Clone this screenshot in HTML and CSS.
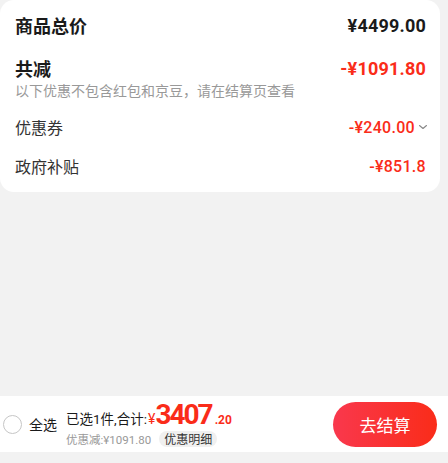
FILE: index.html
```html
<!DOCTYPE html>
<html lang="zh-CN">
<head>
<meta charset="utf-8">
<title>结算</title>
<link rel="stylesheet" href="styles.css">
</head>
<body>
<div class="page">
  <div class="card">
    <div class="row row-total">
      <span class="label-strong">商品总价</span>
      <span class="amt-strong">¥4499.00</span>
    </div>
    <div class="row row-cut">
      <span class="label-strong">共减</span>
      <span class="amt-strong red">-¥1091.80</span>
    </div>
    <div class="note">以下优惠不包含红包和京豆，请在结算页查看</div>
    <div class="row row-item">
      <span class="label">优惠券</span>
      <span class="amt red">-¥240.00<svg class="chev" width="10" height="6" viewBox="0 0 10 6"><polyline points="1.5,1.5 5,4.5 8.5,1.5" fill="none" stroke="#888" stroke-width="1.1" stroke-linecap="round" stroke-linejoin="round"/></svg></span>
    </div>
    <div class="row row-item row-last">
      <span class="label">政府补贴</span>
      <span class="amt red">-¥851.8</span>
    </div>
  </div>
  <div class="spacer"></div>
  <div class="bar">
    <span class="check"></span>
    <span class="all">全选</span>
    <div class="info">
      <div class="sum-line">
        <span class="sum-label">已选1件,合计:</span>
        <span class="yen">¥</span>
        <span class="big">3407</span>
        <span class="dec">.20</span>
      </div>
      <div class="disc-line">
        <span class="disc">优惠减:¥1091.80</span>
        <span class="pill">优惠明细</span>
      </div>
    </div>
    <button class="go">去结算</button>
  </div>
  <div class="foot"></div>
</div>
</body>
</html>
```

FILE: styles.css
```css
* { box-sizing: border-box; }
html, body { margin: 0; padding: 0; }
body {
  background: #f2f2f2;
  font-family: Roboto, "Noto Sans CJK SC", sans-serif;
  color: #1a1a1a;
}
.page {
  display: flex;
  flex-direction: column;
  height: 100vh;
}
.card {
  width: 440px;
  background: #fff;
  border-radius: 14px;
  padding: 12px 14px 15px 15px;
}
.row {
  display: flex;
  justify-content: space-between;
  align-items: center;
}
.row-total { height: 26px; }
.row-cut { height: 22px; margin-top: 19px; }
.row-item { height: 22px; margin-top: 17px; }
.label-strong {
  font-family: "Noto Sans CJK SC", sans-serif;
  font-weight: 700;
  font-size: 18px;
  color: #1a1a1a;
}
.amt-strong {
  font-family: Roboto, sans-serif;
  font-weight: 700;
  font-size: 18px;
  letter-spacing: 0.2px;
  color: #1a1a1a;
}
.red { color: #fa2c19; }
.amt-strong.red { color: #fa2c19; }
.note {
  margin-top: 2px;
  height: 18px;
  line-height: 18px;
  font-family: "Noto Sans CJK SC", sans-serif;
  font-size: 14px;
  color: #999;
}
.label {
  font-family: "Noto Sans CJK SC", sans-serif;
  font-size: 16px;
  color: #333;
}
.amt {
  font-family: Roboto, sans-serif;
  font-weight: 500;
  font-size: 16px;
  letter-spacing: 0.3px;
  display: flex;
  align-items: center;
}
.chev { margin-left: 3px; margin-right: -2px; }
.spacer { flex: 1; }
.bar {
  height: 56px;
  background: #fff;
  display: flex;
  align-items: center;
  padding-left: 3px;
}
.check {
  width: 19px;
  height: 19px;
  border: 1px solid #c6c6c6;
  border-radius: 50%;
  flex: none;
}
.all {
  margin-left: 7px;
  font-family: "Noto Sans CJK SC", sans-serif;
  font-size: 14px;
  color: #1a1a1a;
}
.info {
  margin-left: 9px;
  align-self: flex-start;
  padding-top: 5px;
}
.sum-line {
  display: flex;
  align-items: baseline;
  height: 26px;
}
.sum-label {
  font-family: Roboto, "Noto Sans CJK SC", sans-serif;
  font-size: 13.5px;
  line-height: 1;
  color: #1a1a1a;
}
.yen {
  font-family: Roboto, sans-serif;
  font-size: 14px;
  line-height: 1;
  color: #fa2c19;
  margin-left: 1px;
}
.big {
  font-family: Roboto, sans-serif;
  font-weight: 700;
  font-size: 28px;
  line-height: 1;
  letter-spacing: -2px;
  color: #fa2c19;
}
.dec {
  font-family: Roboto, sans-serif;
  font-weight: 700;
  font-size: 12px;
  line-height: 1;
  color: #fa2c19;
  margin-left: 3px;
}
.disc-line {
  display: flex;
  align-items: center;
  margin-top: 4px;
}
.disc {
  font-family: Roboto, "Noto Sans CJK SC", sans-serif;
  font-size: 11.5px;
  color: #999;
}
.pill {
  margin-left: 8px;
  height: 16px;
  line-height: 16px;
  padding: 0 5px;
  border-radius: 8px;
  background: #f0f0f0;
  font-family: "Noto Sans CJK SC", sans-serif;
  font-size: 12px;
  color: #333;
}
.go {
  margin-left: auto;
  margin-right: 11px;
  width: 104px;
  height: 45px;
  border: none;
  border-radius: 23px;
  background: linear-gradient(90deg, #f9384d 0%, #fa2c19 100%);
  color: #fff;
  font-family: "Noto Sans CJK SC", sans-serif;
  font-size: 17px;
  padding: 0;
}
.foot { height: 11px; }
```
